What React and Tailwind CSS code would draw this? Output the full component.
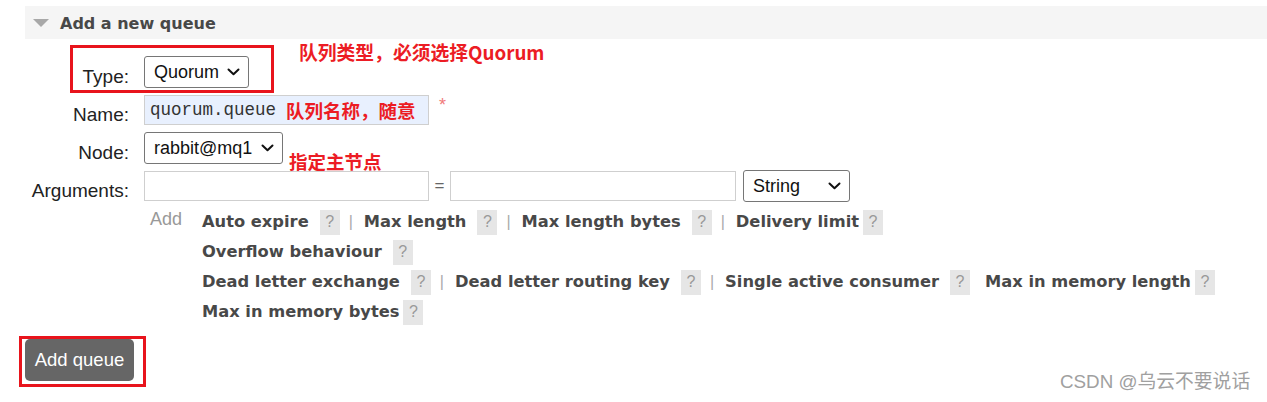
import React from 'react';

const sans = "font-['Liberation_Sans','Noto_Sans_CJK_SC',sans-serif]";
const verd = "font-['DejaVu_Sans',sans-serif]";
const cjk = "font-['Noto_Sans_CJK_SC','Liberation_Sans',sans-serif]";

const Chevron = () => (
    <svg width="13" height="8" viewBox="0 0 13 8" className="shrink-0">
        <path d="M1.5 1.5 L6.5 6.3 L11.5 1.5" fill="none" stroke="#111" strokeWidth="2" strokeLinecap="round" strokeLinejoin="round" />
    </svg>
);

const FakeSelect = ({ value, width }) => (
    <div className={`${width} h-[32px] border border-[#767676] rounded-[3px] bg-white flex items-center justify-between pl-[9px] pr-[8px] text-[18px] text-[#111]`}>
        <span>{value}</span>
        <Chevron />
    </div>
);

const Help = ({ ml }) => (
    <span className={`${ml} inline-flex items-center justify-center w-[20px] h-[25px] bg-[#e6e6e6] text-[#999] text-[16px] ${sans}`}>?</span>
);

const Bar = () => <span className={`ml-[9px] mr-[11px] text-[#aaa] text-[16px] ${sans}`}>|</span>;

// cada item: [rotulo, espaço antes do ?, barra depois, espaço extra]
const lines = [
    [['Auto expire', true, true], ['Max length', true, true], ['Max length bytes', true, true], ['Delivery limit', false, false]],
    [['Overflow behaviour', true, false]],
    [['Dead letter exchange', true, true], ['Dead letter routing key', true, true], ['Single active consumer', true, false, true], ['Max in memory length', false, false]],
    [['Max in memory bytes', false, false]],
];

const App = () => {
    return (
        <div className={`relative w-[1267px] h-[402px] bg-white overflow-hidden ${sans}`}>
            {/* cabeçalho */}
            <div className="ml-[25px] mt-[6px] h-[33px] bg-[#f5f5f5] flex items-center">
                <svg width="16" height="8" viewBox="0 0 16 8" className="ml-[8px] mt-[1px]">
                    <polygon points="0,0 16,0 8,8" fill="#a8a8a8" />
                </svg>
                <span className={`ml-[11px] mt-[3px] text-[16px] font-bold text-[#484848] ${verd}`}>Add a new queue</span>
            </div>

            {/* formulario */}
            <div className="mt-[14px] flex flex-col">
                <div className="h-[38px] flex items-center">
                    <div className="w-[129px] text-right text-[19px] text-[#222] pt-[10px]">Type:</div>
                    <div className="ml-[15px]"><FakeSelect value="Quorum" width="w-[105px]" /></div>
                </div>
                <div className="h-[38px] flex items-center">
                    <div className="w-[129px] text-right text-[19px] text-[#222] pt-[11px]">Name:</div>
                    <div className="ml-[15px] w-[285px] h-[30px] border border-[#cfcfcf] bg-[#e8f0fe] flex items-center pl-[5px] text-[17.5px] text-[#333] font-['Liberation_Mono',monospace]">
                        quorum.queue
                    </div>
                    <span className="ml-[10px] -mt-[10px] text-[18px] text-[#f07a7a]">*</span>
                </div>
                <div className="h-[38px] flex items-center">
                    <div className="w-[129px] text-right text-[19px] text-[#222] pt-[11px]">Node:</div>
                    <div className="ml-[15px]"><FakeSelect value="rabbit@mq1" width="w-[139px]" /></div>
                </div>
                <div className="h-[38px] flex items-center">
                    <div className="w-[129px] text-right text-[19px] text-[#222] pt-[11px]">Arguments:</div>
                    <div className="ml-[15px] w-[285px] h-[30px] border border-[#cfcfcf] bg-white" />
                    <span className="w-[21px] text-center text-[17px] text-[#666]">=</span>
                    <div className="w-[286px] h-[30px] border border-[#cfcfcf] bg-white" />
                    <div className="ml-[7px]"><FakeSelect value="String" width="w-[107px]" /></div>
                </div>

                <div className="flex mt-[1px]">
                    <div className="ml-[150px] w-[52px] text-[18px] text-[#999] leading-[26px]">Add</div>
                    <div className="flex flex-col mt-[1px]">
                        {lines.map((line, i) => (
                            <div key={i} className="h-[30px] flex items-center">
                                {line.map(([label, space, bar, gap], j) => (
                                    <React.Fragment key={j}>
                                        <span className={`text-[16.3px] font-bold text-[#484848] ${verd}`}>{label}</span>
                                        <Help ml={space ? 'ml-[11px]' : 'ml-[4px]'} />
                                        {bar && <Bar />}
                                        {gap && <span className="w-[15px]" />}
                                    </React.Fragment>
                                ))}
                            </div>
                        ))}
                    </div>
                </div>

                <div className="ml-[25px] mt-[12px]">
                    <button className="w-[109px] h-[42px] rounded-[5px] bg-[#666] text-white text-[18.5px]">Add queue</button>
                </div>
            </div>

            {/* anotações */}
            <div className="absolute left-[70px] top-[45px] w-[204px] h-[48px] border-[3px] border-[#e8141c]" />
            <div className="absolute left-[19px] top-[336px] w-[127px] h-[51px] border-[3px] border-[#e8141c]" />
            <div className={`absolute left-[299px] top-[41px] text-[18.8px] leading-[22px] font-bold text-[#ec1c24] ${cjk}`}>队列类型，必须选择Quorum</div>
            <div className={`absolute left-[286px] top-[99px] text-[18.5px] leading-[22px] font-bold text-[#ec1c24] ${cjk}`}>队列名称，随意</div>
            <div className={`absolute left-[289px] top-[150px] text-[18.5px] leading-[22px] font-bold text-[#ec1c24] ${cjk}`}>指定主节点</div>

            <div className={`absolute left-[1060px] top-[371px] text-[18.8px] leading-[22px] text-[#a0a0a0] ${sans}`}>CSDN @乌云不要说话</div>
        </div>
    );
};

export default App;
